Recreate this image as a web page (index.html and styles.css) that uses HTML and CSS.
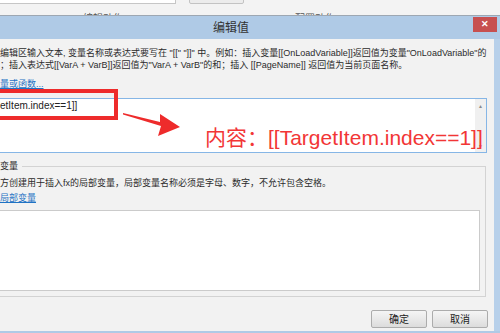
FILE: index.html
```html
<!DOCTYPE html>
<html lang="zh-CN">
<head>
    <meta charset="UTF-8">
    <meta name="viewport" content="width=device-width, initial-scale=1.0">
    <title>编辑值</title>
    <link rel="stylesheet" href="styles.css">
</head>
<body>
    <div class="screen">
        <div class="backdrop">
            <div class="field-row">
                <div class="fake-input"></div>
                <div class="fake-button"></div>
            </div>
            <div class="tab-labels">
                <span class="tab-a">编辑动作</span>
                <span class="tab-b">配置动作</span>
            </div>
        </div>

        <div class="dialog">
            <div class="titlebar">
                <span class="title">编辑值</span>
                <span class="close">✕</span>
            </div>

            <div class="dialog-main">
                <div class="content">
                    <p class="hint">编辑区输入文本, 变量名称或表达式要写在 "[[" "]]" 中。例如：插入变量[[OnLoadVariable]]返回值为变量"OnLoadVariable"的</p>
                    <p class="hint">；插入表达式[[VarA + VarB]]返回值为"VarA + VarB"的和；插入 [[PageName]] 返回值为当前页面名称。</p>
                    <div class="link-row"><a href="#" class="link">量或函数...</a></div>

                    <div class="editor">
                        <div class="editor-text">etItem.index==1]]</div>
                        <div class="scrollbar">
                            <span>▲</span>
                            <span>▼</span>
                        </div>
                    </div>

                    <fieldset class="group">
                        <legend>变量</legend>
                        <p class="group-hint">方创建用于插入fx的局部变量，局部变量名称必须是字母、数字，不允许包含空格。</p>
                        <div class="link-row var-row"><a href="#" class="link">局部变量</a></div>
                        <div class="var-list"></div>
                    </fieldset>

                    <div class="actions">
                        <button class="btn">确定</button>
                        <button class="btn">取消</button>
                    </div>
                </div>
                <div class="frame"></div>

                <!-- annotation drawn on top of the screenshot -->
                <div class="mark-box"></div>
                <svg class="mark-arrow" width="66" height="34" viewBox="0 0 66 34">
                    <polygon points="5,6 42,15 42,7 62,20 40,29 43,19 5,7.5" fill="#ee2b2b"/>
                </svg>
                <div class="mark-text">内容：[[TargetItem.index==1]]</div>
            </div>
            <div class="frame-bottom"></div>
        </div>
    </div>
</body>
</html>
```

FILE: styles.css
```css
* {
    margin: 0;
    padding: 0;
    box-sizing: border-box;
}

body {
    font-family: 'Liberation Sans', 'Noto Sans CJK SC', sans-serif;
    background: #f3f3f3;
    width: 500px;
    height: 333px;
    overflow: hidden;
}

.screen {
    position: relative;
    width: 500px;
    height: 333px;
    overflow: hidden;
}

/* page behind the dialog */
.backdrop {
    height: 16px;
    overflow: hidden;
}

.field-row {
    display: flex;
    gap: 13px;
    height: 4px;
}

.fake-input {
    width: 176px;
    margin-top: -20px;
    height: 24px;
    background: white;
    border: 1px solid #c6c6c6;
    border-left: none;
}

.fake-button {
    width: 55px;
    margin-top: -20px;
    height: 24px;
    background: #ececec;
    border: 1px solid #c3c3c3;
    border-radius: 2px;
}

.tab-labels {
    display: flex;
    font-size: 10px;
    color: #555;
    line-height: 12px;
    margin-top: 9px;
}

.tab-a {
    margin-left: 83px;
}

.tab-b {
    margin-left: 172px;
}

/* dialog */
.dialog {
    position: absolute;
    top: 15px;
    left: 0;
    right: 0;
    bottom: 0;
    border-top: 1px solid #9da7b2;
    display: flex;
    flex-direction: column;
}

.titlebar {
    height: 23px;
    background: #afcae6;
    display: flex;
    justify-content: space-between;
    align-items: flex-start;
    flex-shrink: 0;
}

.title {
    font-family: 'Noto Sans CJK SC', sans-serif;
    font-size: 12px;
    line-height: 22px;
    color: #333;
    padding-left: 213px;
}

.close {
    width: 24px;
    height: 15px;
    margin-top: 1px;
    margin-right: 3px;
    background: #c75050;
    color: white;
    font-size: 9px;
    font-weight: bold;
    line-height: 15px;
    text-align: center;
}

.dialog-main {
    position: relative;
    flex: 1;
    display: flex;
    background: #f2f2f2;
    min-height: 0;
}

.content {
    flex: 1;
    padding: 8px 7px 0 0;
    overflow: hidden;
}

.frame {
    width: 6px;
    background: #b7d0ea;
}

.frame-bottom {
    height: 2px;
    flex-shrink: 0;
    background: #afcae6;
}

.hint {
    font-size: 9px;
    line-height: 12px;
    color: #2b2b2b;
    white-space: nowrap;
}

.link-row {
    margin-top: 7px;
    font-size: 9px;
    line-height: 12px;
    height: 12px;
}

.link {
    color: #1f73c4;
    text-decoration: underline;
}

.editor {
    margin-top: 8px;
    height: 55px;
    background: white;
    border: 1px solid #86b6e6;
    border-left: none;
    display: flex;
}

.editor-text {
    flex: 1;
    font-size: 10px;
    line-height: 12px;
    padding-top: 1px;
    color: #222;
}

.scrollbar {
    width: 11px;
    background: #f0f0f0;
    display: flex;
    flex-direction: column;
    justify-content: space-between;
    align-items: center;
    font-size: 5px;
    line-height: 6px;
    color: #8a8a8a;
    padding: 4px 0 3px;
}

.group {
    margin: 7px 1px 0 0;
    border: 1px solid #d3d3d3;
    border-left: none;
    padding: 0 0 5px 0;
}

.group legend {
    font-size: 9px;
    line-height: 12px;
    color: #2b2b2b;
    padding-right: 4px;
}

.group-hint {
    margin-top: 5px;
    font-size: 9px;
    line-height: 12px;
    color: #2b2b2b;
    white-space: nowrap;
}

.var-row {
    margin-top: 3px;
}

.var-list {
    margin: 6px 5px 0 0;
    height: 81px;
    background: white;
    border: 1px solid #cbcbcb;
    border-left: none;
}

.actions {
    display: flex;
    justify-content: flex-end;
    gap: 5px;
    margin: 13px -1px 0 0;
}

.btn {
    width: 56px;
    height: 18px;
    font-family: 'Noto Sans CJK SC', sans-serif;
    font-size: 10px;
    line-height: 14px;
    color: #222;
    background: linear-gradient(#f5f5f5, #dcdcdc);
    border: 1px solid #acacac;
    border-radius: 2px;
}

/* red annotation */
.mark-box {
    position: absolute;
    left: -4px;
    top: 50px;
    width: 122px;
    height: 31px;
    border: 4px solid #ee2b2b;
}

.mark-arrow {
    position: absolute;
    left: 118px;
    top: 68px;
}

.mark-text {
    position: absolute;
    left: 205px;
    top: 86px;
    font-size: 21px;
    line-height: 26px;
    color: #f23636;
    white-space: nowrap;
}
```
